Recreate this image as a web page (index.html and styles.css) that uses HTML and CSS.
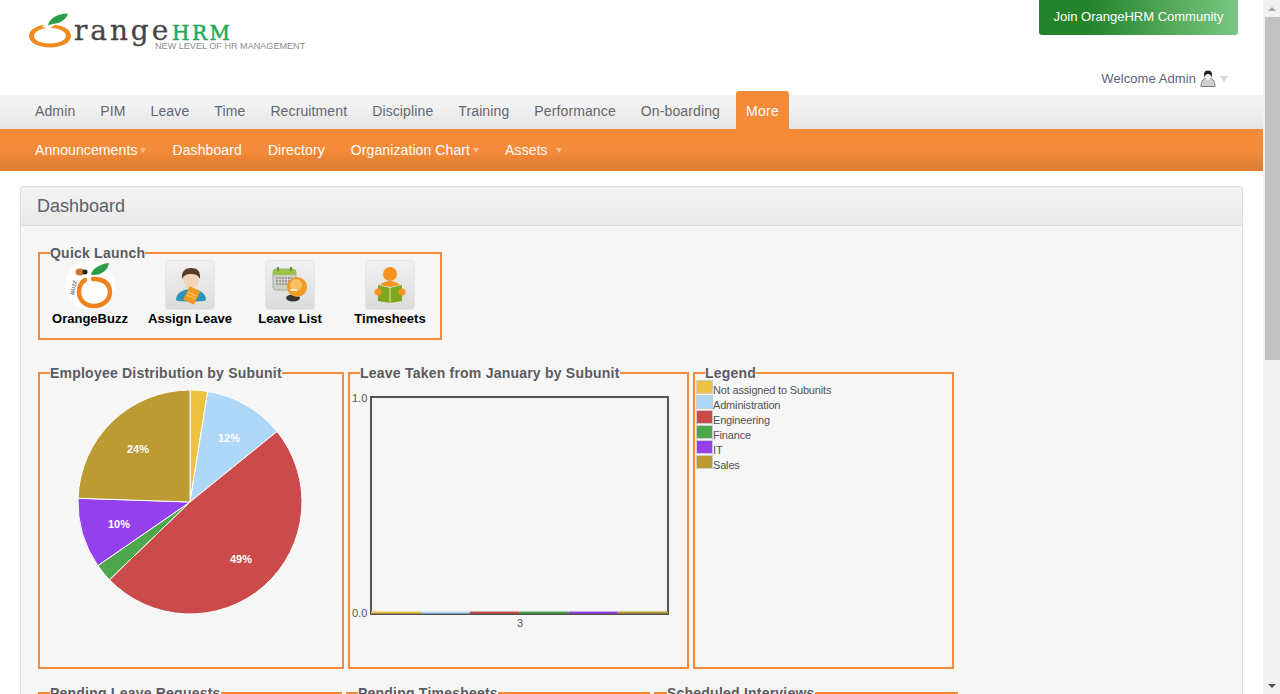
FILE: index.html
```html
<!doctype html>
<html lang="en">
<head>
    <meta charset="UTF-8">
    <title>OrangeHRM</title>
    <link rel="stylesheet" href="styles.css">
</head>
<body>
<div class="page">
    <header class="top">
        <svg class="logo" width="290" height="45" viewBox="0 0 290 45">
            <path fill-rule="evenodd" d="M1 26C1 19 10 14.500 22 14.500C34 14.500 43 19 43 26C43 32.500 34 37.500 22 37.500C10 37.500 1 32.500 1 26ZM6 26C6 30.500 13 33.500 22 33.500C30 33.500 38 30.500 38 26C38 21 30 18 22 18C13 18 6 21.500 6 26Z" fill="#f28b1f"/>
            <path d="M19 12.500L27 15L21 19L14 17Z" fill="#fff"/>
            <path d="M20 15.500C21 9 29 3.500 40 3.500C38 10 31 14 24 14Z" fill="#2b9d48"/>
            <text class="logo-range" x="46" y="30">range</text>
            <text class="logo-hrm" x="144" y="30">HRM</text>
            <text class="logo-tag" x="127" y="39">NEW LEVEL OF HR MANAGEMENT</text>
        </svg>
        <div class="top-right">
            <a class="join" href="#">Join OrangeHRM Community</a>
            <div class="welcome">
                <span>Welcome Admin</span>
                <svg width="16" height="17" viewBox="0 0 16 17">
                    <path d="M1 16.500C1 12 2.500 9.500 5 8.500H11C13.500 9.500 15 12 15 16.500Z" fill="#d0d0d0" stroke="#7a7a7a"/>
                    <circle cx="8" cy="4.500" r="4" fill="#222"/>
                    <ellipse cx="8" cy="7" rx="3" ry="3" fill="#eee"/>
                </svg>
                <i class="arrow-grey"></i>
            </div>
        </div>
    </header>

    <nav class="main-nav">
        <a href="#">Admin</a>
        <a href="#">PIM</a>
        <a href="#">Leave</a>
        <a href="#">Time</a>
        <a href="#">Recruitment</a>
        <a href="#">Discipline</a>
        <a href="#">Training</a>
        <a href="#">Performance</a>
        <a href="#">On-boarding</a>
        <a class="more" href="#">More</a>
    </nav>
    <nav class="sub-nav">
        <a href="#">Announcements<i class="arrow"></i></a>
        <a href="#">Dashboard</a>
        <a href="#">Directory</a>
        <a href="#">Organization Chart<i class="arrow"></i></a>
        <a href="#">Assets<i class="arrow arrow-far"></i></a>
    </nav>

    <section class="panel">
        <h1 class="panel-head">Dashboard</h1>
        <div class="panel-body">
            <fieldset class="box quick">
                <legend>Quick Launch</legend>
                <div class="quick-items">
                    <a class="quick-item" href="#">
                        <svg class="buzz" width="50" height="50" viewBox="0 0 50 50">
                            <circle cx="25" cy="25" r="24.500" fill="#fff"/>
                            <path d="M28 19C38 18 45 24 45 32C45 40 38 46 29 46C20 46 14 40 14 32C14 27 15 23 20 20" fill="none" stroke="#f0821e" stroke-width="4.500" stroke-linecap="round"/>
                            <path d="M26 15C27 9 34 4 44 3C43 10 36 16 26 15Z" fill="#2b9d48"/>
                            <ellipse cx="15" cy="12" rx="4.500" ry="3.500" fill="#c9772b"/>
                            <circle cx="20" cy="12" r="2.500" fill="#222"/>
                            <text class="buzz-text" transform="translate(9 35) rotate(-78)">BUZZ</text>
                        </svg>
                        <span>OrangeBuzz</span>
                    </a>
                    <a class="quick-item" href="#">
                        <span class="tile">
                            <svg width="48" height="48" viewBox="0 0 48 48">
                                <path d="M10 39C10 32 17 28 25 28C33 28 40 32 40 39C40 41 10 41 10 39Z" fill="#2d94ba"/>
                                <ellipse cx="25" cy="18" rx="8" ry="9.500" fill="#f3d3b8"/>
                                <path d="M16 18C15 10 20 7 25 7C31 7 35 10 34 18C32 14 29 13 25 13C21 13 18 14 16 18Z" fill="#5a3a28"/>
                                <rect x="20" y="27" width="12" height="15" rx="1" transform="rotate(25 26 34)" fill="#f39a1e"/>
                                <path d="M22 31L30 35M21 34L29 38" stroke="#ffd98a" stroke-width="1"/>
                            </svg>
                        </span>
                        <span>Assign Leave</span>
                    </a>
                    <a class="quick-item" href="#">
                        <span class="tile">
                            <svg width="48" height="48" viewBox="0 0 48 48">
                                <rect x="7" y="8" width="23" height="21" rx="3" fill="#cfcfc8" stroke="#a9a9a2"/>
                                <path d="M7 14V11C7 9 8 8 10 8H27C29 8 30 9 30 11V14Z" fill="#9cc24a"/>
                                <path d="M12 6V10M25 6V10" stroke="#6f8c34" stroke-width="2"/>
                                <path d="M10 17H26M10 20H26M10 23H26" stroke="#8d8d88" stroke-width="1.500" stroke-dasharray="2 1"/>
                                <ellipse cx="27" cy="37" rx="7" ry="3.500" fill="#333"/>
                                <circle cx="31" cy="26" r="10" fill="#f29a26"/>
                                <circle cx="30" cy="24" r="6" fill="#f9bf62"/>
                                <path d="M24 29H31" stroke="#fff" stroke-width="1.500"/>
                            </svg>
                        </span>
                        <span>Leave List</span>
                    </a>
                    <a class="quick-item" href="#">
                        <span class="tile">
                            <svg width="48" height="48" viewBox="0 0 48 48">
                                <circle cx="24" cy="13" r="7" fill="#f7931e"/>
                                <path d="M14 24C17 21 21 20 24 20C27 20 31 21 34 24L24 26Z" fill="#f7931e"/>
                                <path d="M12 24L24 27L36 24V40L24 42L12 40Z" fill="#7ea71c"/>
                                <path d="M24 27V42" stroke="#dfe8b8" stroke-width="1"/>
                                <circle cx="12" cy="31" r="3.500" fill="#f7931e"/>
                                <circle cx="36" cy="31" r="3.500" fill="#f7931e"/>
                            </svg>
                        </span>
                        <span>Timesheets</span>
                    </a>
                </div>
            </fieldset>

            <div class="row row-charts">
                <fieldset class="box chart-pie">
                    <legend>Employee Distribution by Subunit</legend>
                    <svg width="302" height="287" viewBox="0 0 302 287">
                        <g stroke="#fff" stroke-width="1">
                            <path d="M150 122L150 10A112 112 0 0 1 167.720 11.410Z" fill="#edc240"/>
                            <path d="M150 122L167.720 11.410A112 112 0 0 1 237.040 51.520Z" fill="#afd8f8"/>
                            <path d="M150 122L237.040 51.520A112 112 0 0 1 224.210 205.890A112 112 0 0 1 69.440 199.800Z" fill="#cb4b4b"/>
                            <path d="M150 122L69.440 199.800A112 112 0 0 1 57.810 185.600Z" fill="#4da74d"/>
                            <path d="M150 122L57.810 185.600A112 112 0 0 1 38.060 118.280Z" fill="#9440ed"/>
                            <path d="M150 122L38.060 118.280A112 112 0 0 1 150 10Z" fill="#bd9b33"/>
                        </g>
                        <g class="pie-label">
                            <text x="189" y="62">12%</text>
                            <text x="201" y="183">49%</text>
                            <text x="79" y="148">10%</text>
                            <text x="98" y="73">24%</text>
                        </g>
                    </svg>
                </fieldset>
                <fieldset class="box chart-bar">
                    <legend>Leave Taken from January by Subunit</legend>
                    <svg width="337" height="287" viewBox="0 0 337 287">
                        <rect x="21" y="17" width="297" height="217" fill="none" stroke="#545454" stroke-width="2"/>
                        <rect x="21" y="231.500" width="50" height="2" fill="#edc240"/>
                        <rect x="71" y="231.500" width="49" height="2" fill="#afd8f8"/>
                        <rect x="120" y="231.500" width="49.300" height="2" fill="#cb4b4b"/>
                        <rect x="169.300" y="231.500" width="49.400" height="2" fill="#4da74d"/>
                        <rect x="218.700" y="231.500" width="49" height="2" fill="#9440ed"/>
                        <rect x="267.700" y="231.500" width="50.300" height="2" fill="#bd9b33"/>
                        <g class="axis-label">
                            <text x="2" y="22">1.0</text>
                            <text x="2" y="237">0.0</text>
                            <text x="167" y="247">3</text>
                        </g>
                    </svg>
                </fieldset>
                <fieldset class="box chart-legend">
                    <legend>Legend</legend>
                    <ul class="legend-list">
                        <li><i class="swatch c-none"></i>Not assigned to Subunits</li>
                        <li><i class="swatch c-admin"></i>Administration</li>
                        <li><i class="swatch c-eng"></i>Engineering</li>
                        <li><i class="swatch c-fin"></i>Finance</li>
                        <li><i class="swatch c-it"></i>IT</li>
                        <li><i class="swatch c-sales"></i>Sales</li>
                    </ul>
                </fieldset>
            </div>

            <div class="row row-pending">
                <fieldset class="box pending">
                    <legend>Pending Leave Requests</legend>
                </fieldset>
                <fieldset class="box pending">
                    <legend>Pending Timesheets</legend>
                </fieldset>
                <fieldset class="box pending">
                    <legend>Scheduled Interviews</legend>
                </fieldset>
            </div>
        </div>
    </section>
</div>

<div class="scrollbar">
    <div class="scroll-btn"><i class="scroll-up"></i></div>
    <div class="scroll-thumb"></div>
    <div class="scroll-track"></div>
    <div class="scroll-btn"><i class="scroll-down"></i></div>
</div>
</body>
</html>
```

FILE: styles.css
```css
* {
    box-sizing: border-box;
}

body {
    margin: 0;
    height: 100vh;
    display: flex;
    overflow: hidden;
    background: #fff;
    font-family: "Liberation Sans", Arial, sans-serif;
    color: #545454;
}

a {
    text-decoration: none;
    color: inherit;
}

.page {
    flex: 1;
    min-width: 0;
}

/* top */
.top {
    height: 95px;
    display: flex;
    justify-content: space-between;
    align-items: flex-start;
    padding: 10px 25px 0 28px;
}

.logo-range {
    font-family: "DejaVu Serif", serif;
    font-size: 28px;
    letter-spacing: 2.9px;
    fill: #444;
    stroke: #444;
    stroke-width: .3px;
}

.logo-hrm {
    font-family: "DejaVu Serif", serif;
    font-size: 20px;
    letter-spacing: 2.5px;
    fill: #22a854;
    stroke: #22a854;
    stroke-width: .5px;
}

.logo-tag {
    font-family: "Liberation Sans", sans-serif;
    font-size: 9.1px;
    fill: #8b8b8b;
}

.top-right {
    margin-top: -10px;
    display: flex;
    flex-direction: column;
    align-items: flex-end;
}

.join {
    width: 199px;
    height: 35px;
    line-height: 34px;
    text-align: center;
    font-size: 13px;
    color: #fff;
    background: linear-gradient(to right, #23842b 25%, #7ac782);
    border-radius: 0 0 3px 3px;
}

.welcome {
    margin: 34px 10px 0 0;
    height: 18px;
    display: flex;
    align-items: center;
    font-size: 13px;
    letter-spacing: .08px;
    color: #5f6079;
}

.welcome svg {
    margin-left: 4px;
}

.arrow-grey {
    margin: 3px 0 0 4px;
    border-left: 4px solid transparent;
    border-right: 4px solid transparent;
    border-top: 7px solid #dcdcdc;
}

/* navs */
.main-nav {
    height: 34px;
    display: flex;
    align-items: flex-start;
    gap: 25px;
    padding-left: 35px;
    font-size: 14px;
    line-height: 32px;
    letter-spacing: .12px;
    color: #5f6670;
    background: linear-gradient(#f3f3f3 30%, #e4e4e4);
}

.main-nav .more {
    height: 38px;
    margin: -4px 0 0 -9px;
    padding: 0 10px;
    line-height: 40px;
    letter-spacing: .3px;
    color: #fff;
    background: #f48b38;
    border-radius: 3px 3px 0 0;
}

.sub-nav {
    height: 42px;
    display: flex;
    align-items: center;
    gap: 26px;
    padding-left: 35px;
    font-size: 14px;
    letter-spacing: .1px;
    color: #fff;
    background: linear-gradient(#f48b39 50%, #db7c32);
}

.sub-nav a {
    display: flex;
    align-items: center;
}

.arrow {
    margin-left: 3px;
    border-left: 3px solid transparent;
    border-right: 3px solid transparent;
    border-top: 5px solid rgba(255, 255, 255, .45);
}

.arrow-far {
    margin-left: 8px;
}

/* panel */
.panel {
    margin: 15px 20px 0;
    background: #f6f6f6;
    border: 1px solid #dedede;
    border-radius: 3px;
}

.panel-head {
    margin: 0;
    height: 39px;
    padding-left: 16px;
    line-height: 38px;
    font-size: 18px;
    font-weight: normal;
    color: #5d6067;
    background: linear-gradient(#f3f3f3, #e9e9e9);
    border-bottom: 1px solid #dedede;
}

.panel-body {
    padding: 20px 0 0 17px;
}

.box {
    margin: 0;
    padding: 0;
    min-width: 0;
    border: 2px solid #f48b38;
}

.box legend {
    margin-left: 10px;
    padding: 0;
    font-size: 14px;
    line-height: 14px;
    font-weight: bold;
    letter-spacing: .22px;
    color: #5b5b63;
}

/* quick launch */
.quick {
    width: 404px;
    height: 94px;
}

.quick-items {
    display: flex;
}

.quick-item {
    width: 100px;
    display: flex;
    flex-direction: column;
    align-items: center;
    gap: 1px;
    font-size: 13px;
    line-height: 16px;
    font-weight: bold;
    color: #000;
}

.tile {
    width: 50px;
    height: 50px;
    display: block;
    background: linear-gradient(#f1f1f1, #dbdbdb);
    border: 1px solid #e6e6de;
    border-radius: 4px;
}

.tile svg,
.buzz {
    display: block;
}

.buzz-text {
    font-family: "Liberation Sans", sans-serif;
    font-size: 5.5px;
    font-weight: bold;
    fill: #777;
}

/* chart rows */
.row {
    display: flex;
    gap: 4px;
}

.row-charts {
    margin-top: 26px;
}

.row-pending {
    margin-top: 17px;
}

.row-charts .box {
    height: 303px;
}

.chart-pie {
    width: 306px;
}

.chart-bar {
    width: 341px;
}

.chart-legend {
    width: 261px;
    padding-left: 1px;
}

.box.chart-legend legend {
    margin-left: 9px;
}

.box > svg {
    display: block;
}

.pie-label text {
    font-size: 11px;
    font-weight: bold;
    text-anchor: middle;
    fill: #fff;
}

.axis-label text {
    font-size: 11px;
    fill: #545454;
}

.legend-list {
    margin: 0;
    padding: 0;
    list-style: none;
    font-size: 11px;
    letter-spacing: -.17px;
}

.legend-list li {
    height: 15px;
    display: flex;
    align-items: flex-end;
    line-height: 10px;
}

.swatch {
    width: 17px;
    height: 14px;
    align-self: flex-start;
    border: 1px solid #ccc;
    background-clip: padding-box;
}

.c-none { background-color: #edc240; }
.c-admin { background-color: #afd8f8; }
.c-eng { background-color: #cb4b4b; }
.c-fin { background-color: #4da74d; }
.c-it { background-color: #9440ed; }
.c-sales { background-color: #bd9b33; }

.pending {
    width: 304px;
    height: 200px;
}

.pending:last-child legend {
    margin-left: 11px;
}

/* scrollbar */
.scrollbar {
    width: 17px;
    display: flex;
    flex-direction: column;
    background: #f1f1f1;
}

.scroll-btn {
    height: 17px;
    display: flex;
    align-items: center;
    justify-content: center;
}

.scroll-up {
    border-left: 4px solid transparent;
    border-right: 4px solid transparent;
    border-bottom: 4px solid #a3a3a3;
}

.scroll-down {
    border-left: 4px solid transparent;
    border-right: 4px solid transparent;
    border-top: 4px solid #505050;
}

.scroll-thumb {
    height: 343px;
    margin-left: 2px;
    background: #c1c1c1;
}

.scroll-track {
    flex: 1;
}
```
